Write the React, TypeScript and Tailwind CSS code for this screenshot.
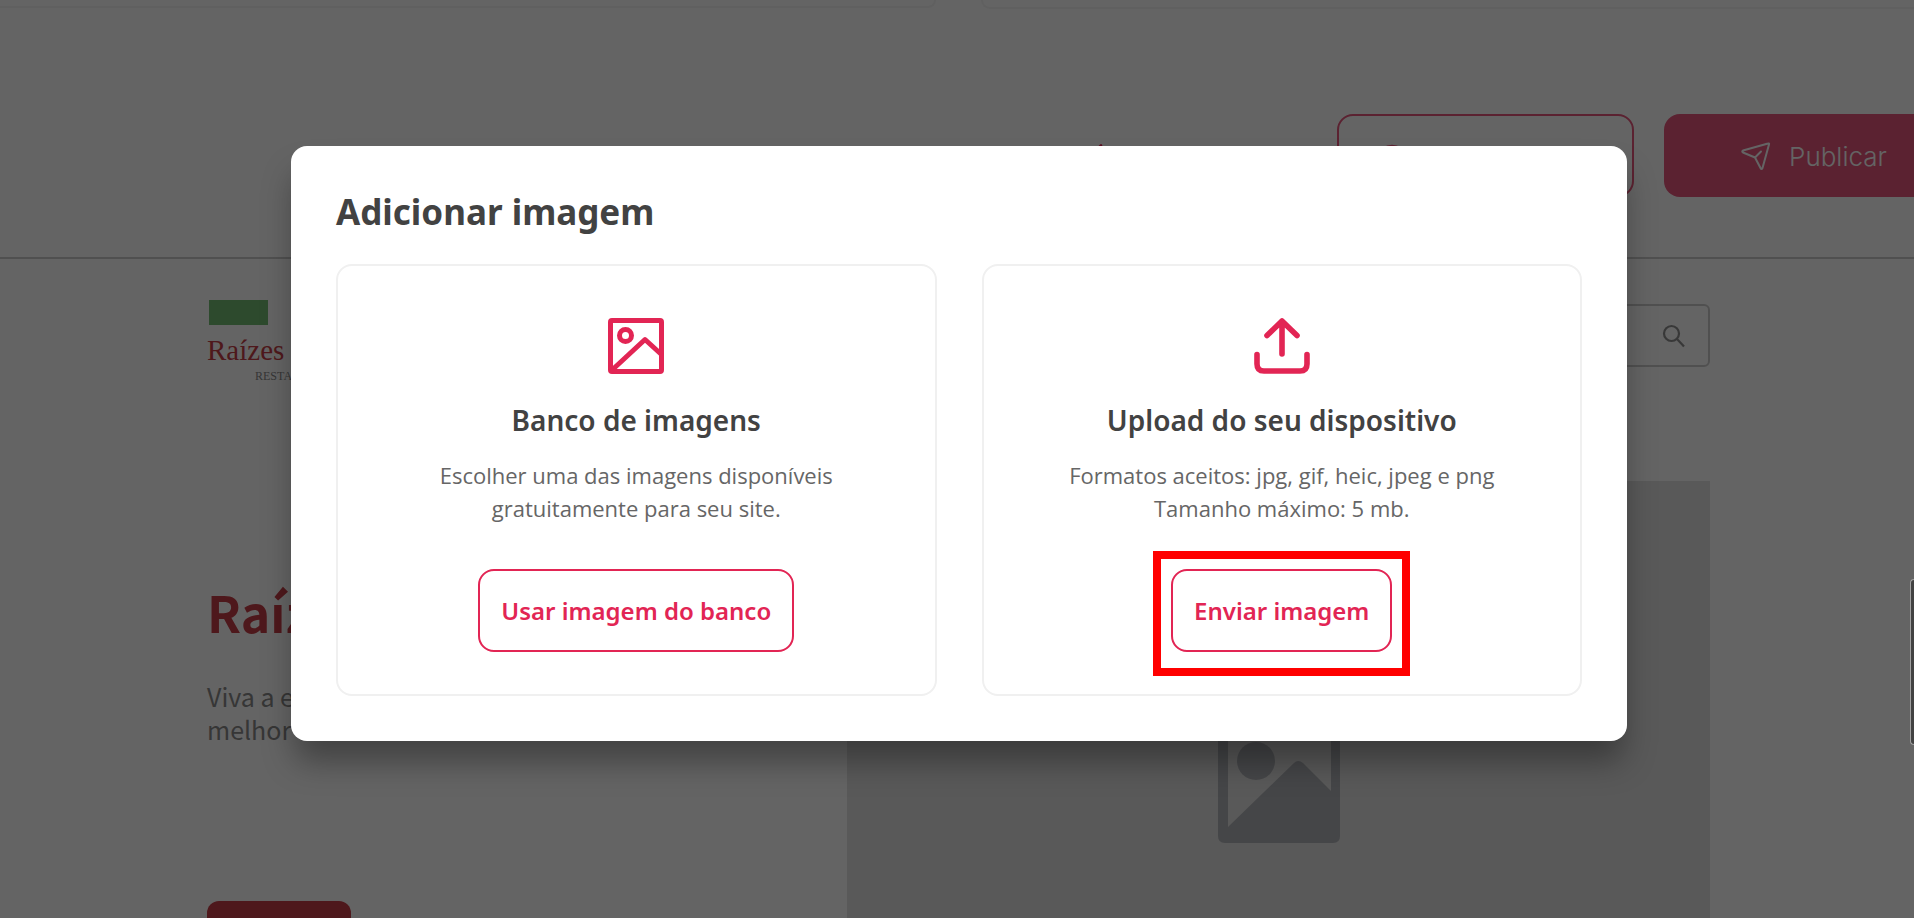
import React from 'react';
import { Eye, Undo2 } from 'lucide-react';

const SOURCES = [
  {
    id: 'bank',
    title: 'Banco de imagens',
    lines: ['Escolher uma das imagens disponíveis', 'gratuitamente para seu site.'],
    action: 'Usar imagem do banco',
    highlighted: false,
  },
  {
    id: 'upload',
    title: 'Upload do seu dispositivo',
    lines: ['Formatos aceitos: jpg, gif, heic, jpeg e png', 'Tamanho máximo: 5 mb.'],
    action: 'Enviar imagem',
    highlighted: true,
  },
];

function ImageIcon() {
  return (
    <svg viewBox="0 0 56 56" className="size-14" fill="none" stroke="currentColor" strokeWidth="5" strokeLinejoin="round">
      <rect x="2.5" y="2.5" width="51" height="51" rx="1.5" />
      <circle cx="17.5" cy="17.5" r="6" />
      <path d="M3 53 37 21.5 54 37" />
    </svg>
  );
}

function UploadIcon() {
  return (
    <svg viewBox="0 0 56 56" className="size-14" fill="none" stroke="currentColor" strokeWidth="5.6" strokeLinecap="round" strokeLinejoin="round">
      <path d="M28 36V3M13 17.5 28 3l15 14.5" />
      <path d="M3 36.5V46q0 7 7 7h36q7 0 7-7v-9.5" />
    </svg>
  );
}

function SendIcon() {
  return (
    <svg viewBox="0 0 30 30" className="size-[30px]" fill="none" stroke="currentColor" strokeWidth="2" strokeLinejoin="round" strokeLinecap="round">
      <path d="M27 1.5Q28.5 1 28 2.5L21.5 26Q20.5 28 19.5 26L14 15.5 2 10.5Q0.5 9.5 2 8.5ZM14 15.5l6-6" />
    </svg>
  );
}

function SearchIcon() {
  return (
    <svg viewBox="0 0 24 24" className="size-6" fill="none" stroke="currentColor" strokeWidth="2.2">
      <circle cx="9.5" cy="9.5" r="7.5" />
      <path d="m15 15 7 7.5" />
    </svg>
  );
}

function PlaceholderImage() {
  return (
    <svg viewBox="0 0 122 122" className="h-[122px] w-[122px] text-[#acafb4]">
      <path
        fill="currentColor"
        fillRule="evenodd"
        d="M7 0h108q7 0 7 7v108q0 7-7 7H7q-7 0-7-7V7q0-7 7-7ZM10 9v97l66-64q4-4 9 0l28 28V9Z"
      />
      <circle cx="38" cy="40" r="19" fill="currentColor" />
    </svg>
  );
}

function SitePage() {
  return (
    <div className="h-full overflow-hidden bg-[#fafafa]">
      <div className="flex h-[9px] gap-[45px]">
        <div className="h-2 w-[936px] shrink-0 rounded-br-xl border-r-2 border-b-2 border-[#f0f0f0]" />
        <div className="h-[9px] flex-1 rounded-bl-xl border-b-2 border-l-2 border-[#f0f0f0]" />
      </div>

      <header className="flex h-[250px] items-start justify-end gap-[30px] overflow-hidden border-b-2 border-[#c8c8c8] pt-[105px]">
        <button type="button" aria-label="Desfazer" className="mr-[186px] flex h-[83px] items-center text-[#e22554]">
          <Undo2 size={32} />
        </button>
        <button
          type="button"
          aria-label="Visualizar"
          className="flex h-[83px] w-[297px] items-center rounded-2xl border-2 border-[#e3557a] pl-9 text-[#e3557a]"
        >
          <Eye size={34} />
        </button>
        <button
          type="button"
          className="-mr-[50px] flex h-[83px] w-[300px] items-center justify-center gap-[18px] rounded-2xl bg-[#e3557a] pt-0.5 font-['Inter',sans-serif] text-[26px] font-light text-[#fafafa]"
        >
          <SendIcon />
          Publicar
        </button>
      </header>

      <main className="pr-[204px] pl-[207px]">
        <div className="flex h-[222px] items-start justify-between">
          <div className="pt-[41px]">
            <div className="ml-0.5 h-[25px] w-[59px] bg-[#70b970]" />
            <div className="mt-1.5 font-['Liberation_Serif',serif] text-[29px] leading-[38px] text-[#c33e46]">Raízes</div>
            <div className="pl-12 font-['Liberation_Serif',serif] text-[12px] leading-[14px] text-[#888888]">RESTAURANTE</div>
          </div>
          <div className="mt-[45px] flex h-[63px] w-[400px] items-center justify-end rounded-md border-2 border-[#c8c8c8] pr-[22px] text-[#8c8c8c]">
            <SearchIcon />
          </div>
        </div>

        <div className="flex items-start justify-between">
          <div className="w-[500px] pt-[98px] font-['Noto_Sans_CJK_SC',sans-serif]">
            <h1 className="text-[50px] leading-[64px] font-bold text-[#c33e46]">Raízes</h1>
            <p className="pt-[37px] text-[25px] leading-[33px] text-[#888888]">
              Viva a experiência
              <br />
              melhor
            </p>
            <div className="mt-[155px] h-[60px] w-[144px] rounded-xl bg-[#c33e46]" />
          </div>
          <div className="flex h-[480px] w-[863px] items-start justify-center bg-[#dedede] pt-[240px]">
            <PlaceholderImage />
          </div>
        </div>
      </main>
    </div>
  );
}

export default function App() {
  return (
    <div className="relative h-screen overflow-hidden">
      <SitePage />

      <div className="absolute inset-0 flex items-start justify-center bg-black/60 pt-[146px] pl-1">
        <section
          role="dialog"
          aria-labelledby="dialog-title"
          className="w-[1336px] rounded-2xl bg-white px-[45px] pt-[44px] pb-[45px] shadow-[0_24px_32px_-4px_rgba(0,0,0,0.35)]"
        >
          <h2 id="dialog-title" className="font-['Noto_Sans',sans-serif] text-[35px] leading-[44px] font-bold text-[#424242]">
            Adicionar imagem
          </h2>
          <div className="mt-[30px] grid grid-cols-2 gap-[45px]">
            {SOURCES.map(source => (
              <article key={source.id} className="flex h-[432px] flex-col items-center rounded-2xl border-2 border-[#f0f0f0] pt-[52px] text-center">
                <div className="text-[#e22554]">{source.id === 'bank' ? <ImageIcon /> : <UploadIcon />}</div>
                <h3 className="mt-[26px] font-['Noto_Sans',sans-serif] text-[28px] leading-[40px] font-semibold text-[#424242]">{source.title}</h3>
                <p className="mt-[19px] font-['Open_Sans',sans-serif] text-[22px] leading-[33px] text-[#666666]">
                  {source.lines[0]}
                  <br />
                  {source.lines[1]}
                </p>
                <div className="relative mt-[44px]">
                  <button
                    type="button"
                    className="h-[83px] rounded-2xl border-2 border-[#e22554] px-[21px] font-['Noto_Sans',sans-serif] text-[24px] font-semibold text-[#e22554]"
                  >
                    {source.action}
                  </button>
                  {source.highlighted && <div className="pointer-events-none absolute -inset-x-[18px] -top-[18px] -bottom-6 border-8 border-[#ff0000]" />}
                </div>
              </article>
            ))}
          </div>
        </section>

        {/* side tab, cut by the window edge */}
        <div className="absolute top-[579px] right-0 h-[166px] w-1 rounded-l-sm border-y border-l border-[#a0a0a0] bg-[#424242]" />
      </div>
    </div>
  );
}
